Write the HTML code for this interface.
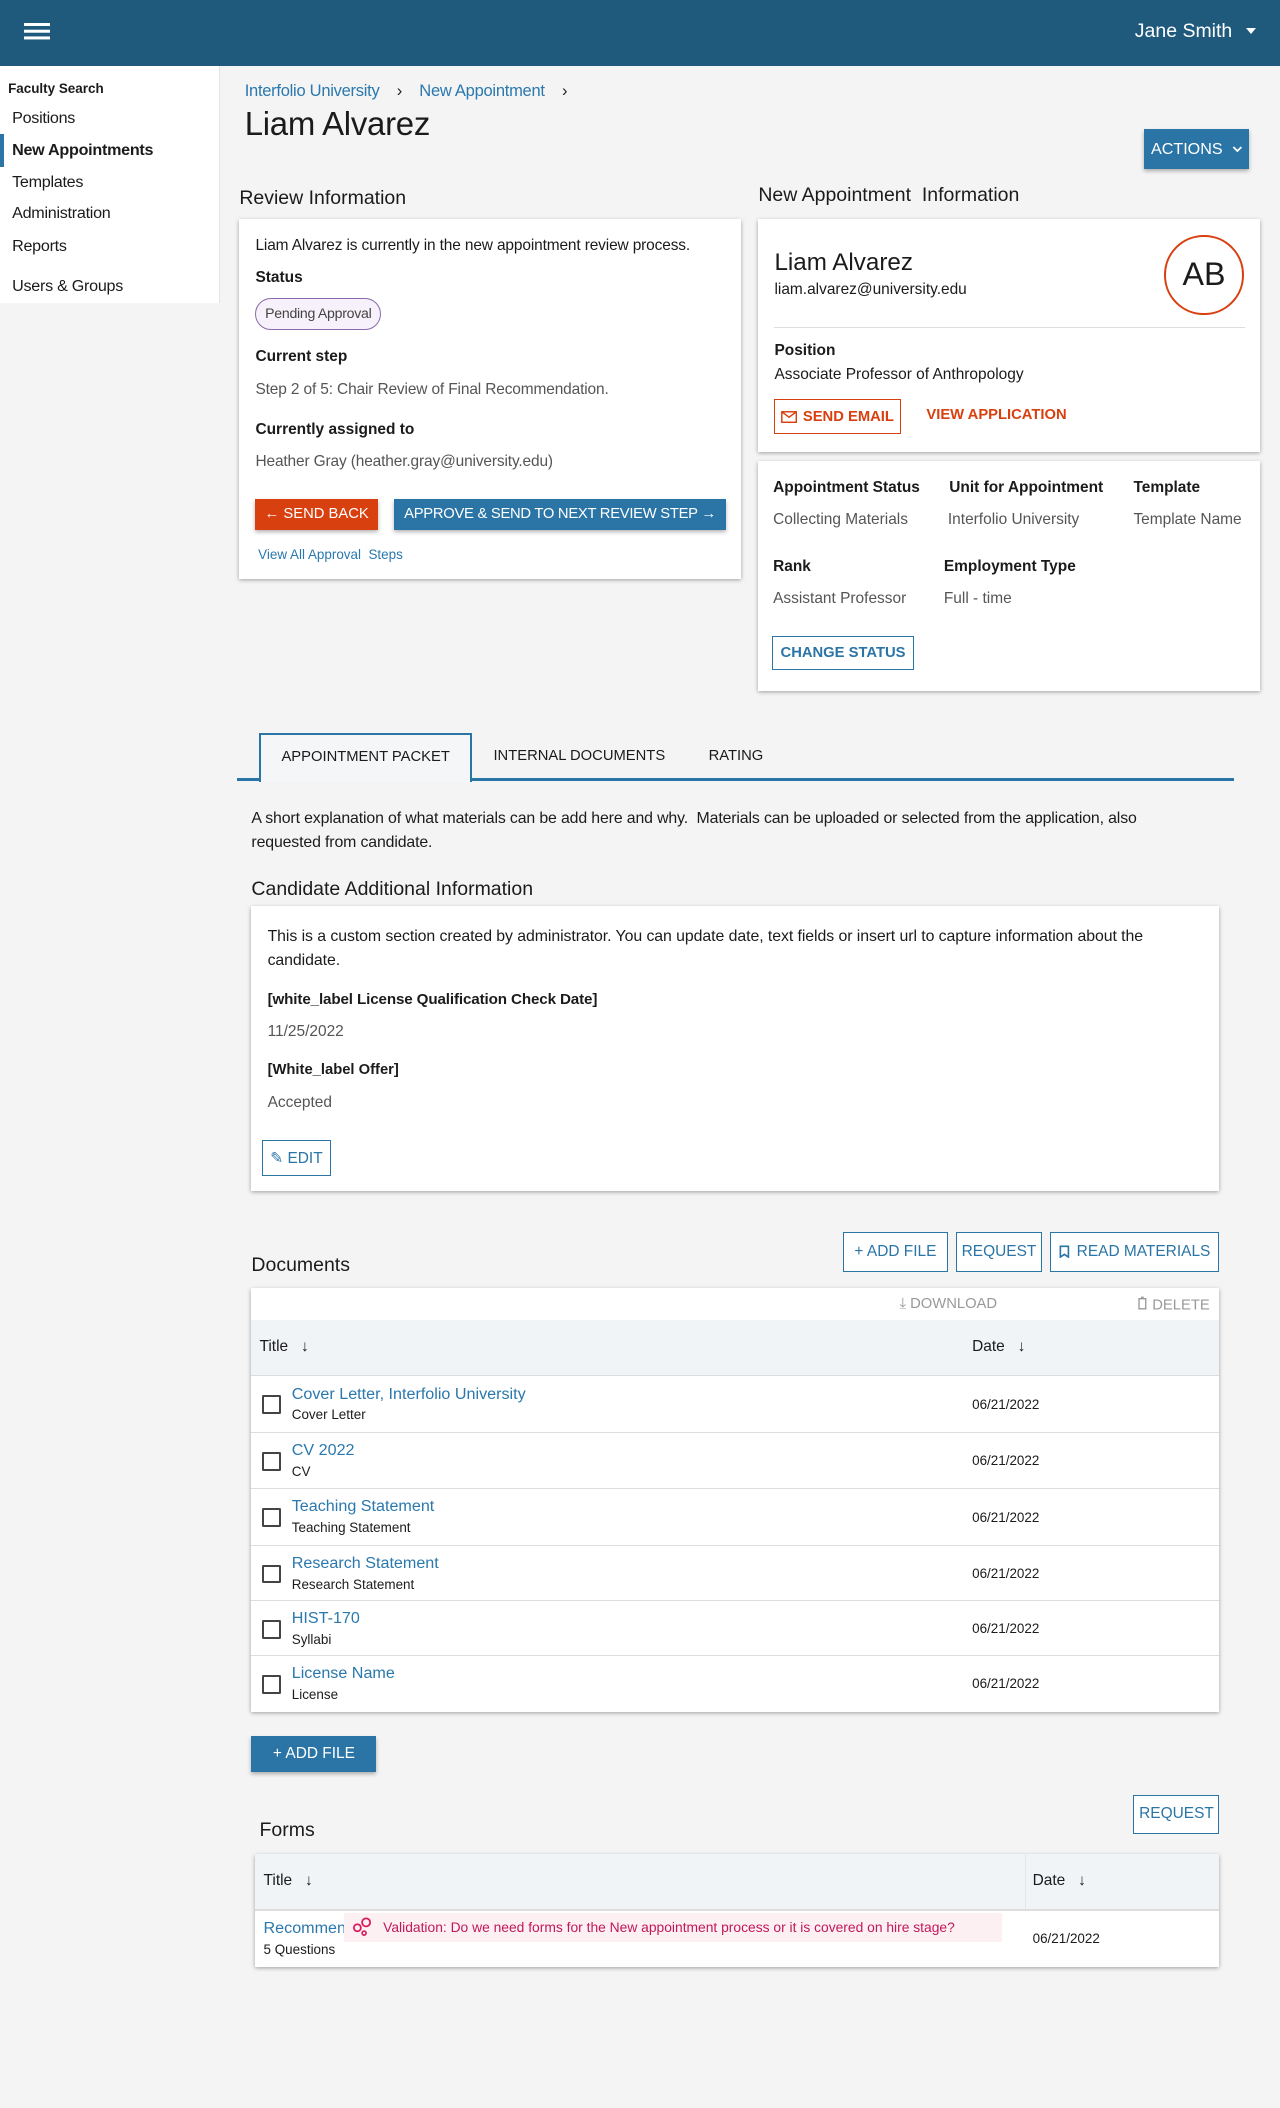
<!DOCTYPE html>
<html><head><meta charset="utf-8">
<style>
html,body{margin:0;padding:0}
body{zoom:1.34454;width:952px;height:1568px;background:#f4f4f4;font-family:"Liberation Sans",Arial,sans-serif;color:#1b1b1b;position:relative;overflow:hidden;font-size:11.5px}
.a{position:absolute;white-space:nowrap}
.card{position:absolute;background:#fff;box-shadow:0 1px 3px rgba(0,0,0,.35)}
.blue{color:#2a78ad}
.grey{color:#555}
.b{font-weight:bold}
.btn{position:absolute;box-sizing:border-box;display:flex;align-items:center;justify-content:center;font-size:11.5px;white-space:nowrap}
.ob{border:1px solid #2a75a6;color:#2a75a6;background:#fff}
.fb{background:#2a75a6;color:#fff;box-shadow:0 2px 3px rgba(0,0,0,.3)}
.cb{position:absolute;width:11px;height:11px;border:1.5px solid #444;border-radius:1px}
.row{position:absolute;left:0;right:0;border-top:1px solid #ddd;height:42px}
.side{font-size:12px;letter-spacing:-0.2px}
</style></head><body>
<div class="a" style="left:0;top:0;width:952px;height:49px;background:#1f5a7d"></div>
<div class="a" style="left:18px;top:17px;width:19px;height:2px;background:#fff;box-shadow:0 5px 0 #fff,0 10px 0 #fff"></div>
<div class="a" style="left:844px;top:15px;color:#fff;font-size:14.5px">Jane Smith</div>
<div class="a" style="left:927px;top:21px;border:4px solid transparent;border-top:5px solid #fff"></div>

<!-- sidebar -->
<div class="a" style="left:0;top:49px;width:163px;height:176px;background:#fff;border-right:1px solid #e4e4e4"></div>
<div class="a b" style="left:6px;top:60px;font-size:10px">Faculty Search</div>
<div class="a side" style="left:9px;top:81px">Positions</div>
<div class="a" style="left:0;top:100px;width:3px;height:24px;background:#2a75a6"></div>
<div class="a b side" style="left:9px;top:105px">New Appointments</div>
<div class="a side" style="left:9px;top:129px">Templates</div>
<div class="a side" style="left:9px;top:152px">Administration</div>
<div class="a side" style="left:9px;top:176px">Reports</div>
<div class="a side" style="left:9px;top:206px">Users &amp; Groups</div>

<div class="a blue" style="left:182px;top:60px;font-size:12.3px;letter-spacing:-0.2px">Interfolio University &nbsp;&nbsp;&nbsp;<span style="color:#222">›</span>&nbsp;&nbsp;&nbsp; New Appointment &nbsp;&nbsp;&nbsp;<span style="color:#222">›</span></div>
<div class="a" style="left:182px;top:78px;font-size:24.5px;letter-spacing:-0.2px">Liam Alvarez</div>
<div class="btn fb" style="left:851px;top:96px;width:78px;height:30px;font-size:12px">ACTIONS &nbsp;<svg width="8" height="6" viewBox="0 0 8 6"><path d="M1 1.5l3 3 3-3" stroke="#fff" stroke-width="1.3" fill="none"/></svg></div>

<!-- review -->
<div class="a" style="left:178px;top:139px;font-size:14.5px">Review Information</div>
<div class="card" style="left:178px;top:163px;width:373px;height:268px"></div>
<div class="a" style="left:190px;top:176px;letter-spacing:-0.1px">Liam Alvarez is currently in the new appointment review process.</div>
<div class="a b" style="left:190px;top:200px">Status</div>
<div class="a" style="left:190px;top:222px;width:92px;height:22px;border:1px solid #8a6aa8;border-radius:12px;background:#f6f1fa;font-size:10.5px;line-height:22px;text-align:center;color:#444;letter-spacing:-0.2px">Pending Approval</div>
<div class="a b" style="left:190px;top:259px">Current step</div>
<div class="a grey" style="left:190px;top:283px;letter-spacing:-0.1px">Step 2 of 5: Chair Review of Final Recommendation.</div>
<div class="a b" style="left:190px;top:313px">Currently assigned to</div>
<div class="a grey" style="left:190px;top:337px;letter-spacing:-0.1px">Heather Gray (heather.gray@university.edu)</div>
<div class="btn" style="left:190px;top:371px;width:91px;height:23px;background:#d9400f;color:#fff;box-shadow:0 2px 3px rgba(0,0,0,.3);font-size:11px">← SEND BACK</div>
<div class="btn fb" style="left:293px;top:371px;width:247px;height:23px;font-size:11px;letter-spacing:-0.2px">APPROVE &amp; SEND TO NEXT REVIEW STEP →</div>
<div class="a blue" style="left:192px;top:407px;font-size:10px">View All Approval&nbsp; Steps</div>

<!-- new appointment info -->
<div class="a" style="left:564px;top:137px;font-size:14.5px">New Appointment&nbsp; Information</div>
<div class="card" style="left:564px;top:163px;width:373px;height:173px"></div>
<div class="a" style="left:576px;top:185px;font-size:18px">Liam Alvarez</div>
<div class="a" style="left:576px;top:209px">liam.alvarez@university.edu</div>
<div class="a" style="left:866px;top:175px;width:56px;height:56px;border:1.5px solid #d9400f;border-radius:50%;text-align:center;line-height:56px;font-size:24px">AB</div>
<div class="a" style="left:576px;top:243px;width:350px;height:1px;background:#ddd"></div>
<div class="a b" style="left:576px;top:254px">Position</div>
<div class="a" style="left:576px;top:272px">Associate Professor of Anthropology</div>
<div class="btn" style="left:576px;top:297px;width:94px;height:26px;border:1px solid #d9400f;color:#d9400f;font-weight:bold;font-size:11px"><svg width="12" height="9" viewBox="0 0 12 9" style="margin-right:4px"><rect x="0.6" y="0.6" width="10.8" height="7.8" stroke="#d9400f" fill="none" stroke-width="1.1"/><path d="M0.6 0.6l5.4 4 5.4-4" stroke="#d9400f" fill="none" stroke-width="1.1"/></svg>SEND EMAIL</div>
<div class="a b" style="left:689px;top:303px;color:#d9400f;font-size:11px">VIEW APPLICATION</div>

<div class="card" style="left:564px;top:343px;width:373px;height:171px"></div>
<div class="a b" style="left:575px;top:356px">Appointment Status</div>
<div class="a b" style="left:706px;top:356px">Unit for Appointment</div>
<div class="a b" style="left:843px;top:356px">Template</div>
<div class="a grey" style="left:575px;top:380px">Collecting Materials</div>
<div class="a grey" style="left:705px;top:380px">Interfolio University</div>
<div class="a grey" style="left:843px;top:380px">Template Name</div>
<div class="a b" style="left:575px;top:415px">Rank</div>
<div class="a b" style="left:702px;top:415px">Employment Type</div>
<div class="a grey" style="left:575px;top:439px">Assistant Professor</div>
<div class="a grey" style="left:702px;top:439px">Full - time</div>
<div class="btn ob" style="left:574px;top:473px;width:106px;height:25px;font-weight:bold;font-size:11px">CHANGE STATUS</div>

<!-- tabs -->
<div class="a" style="left:176px;top:579px;width:742px;height:2px;background:#2a75a6"></div>
<div class="a" style="left:193px;top:545px;width:155px;height:35px;border:2px solid #2a75a6;border-bottom:none;background:#f4f6f8;text-align:center;line-height:34px;font-size:11px">APPOINTMENT PACKET</div>
<div class="a" style="left:367px;top:556px;font-size:11px">INTERNAL DOCUMENTS</div>
<div class="a" style="left:527px;top:556px;font-size:11px">RATING</div>

<div class="a" style="left:187px;top:600px;line-height:18px;font-size:11.8px;letter-spacing:-0.1px">A short explanation of what materials can be add here and why.&nbsp; Materials can be uploaded or selected from the application, also<br>requested from candidate.</div>
<div class="a" style="left:187px;top:653px;font-size:14.5px">Candidate Additional Information</div>
<div class="card" style="left:187px;top:674px;width:720px;height:212px"></div>
<div class="a" style="left:199px;top:688px;line-height:18px;font-size:11.8px;letter-spacing:-0.05px">This is a custom section created by administrator. You can update date, text fields or insert url to capture information about the<br>candidate.</div>
<div class="a b" style="left:199px;top:737px;font-size:11.3px;letter-spacing:-0.1px">[white_label License Qualification Check Date]</div>
<div class="a grey" style="left:199px;top:761px">11/25/2022</div>
<div class="a b" style="left:199px;top:790px;font-size:11px">[White_label Offer]</div>
<div class="a grey" style="left:199px;top:814px">Accepted</div>
<div class="btn ob" style="left:195px;top:848px;width:51px;height:27px">✎ EDIT</div>

<!-- documents -->
<div class="a" style="left:187px;top:933px;font-size:14.5px">Documents</div>
<div class="btn ob" style="left:627px;top:916px;width:78px;height:30px;font-size:11.5px">+ ADD FILE</div>
<div class="btn ob" style="left:711px;top:916px;width:64px;height:30px;font-size:11.5px">REQUEST</div>
<div class="btn ob" style="left:781px;top:916px;width:126px;height:30px;font-size:11.5px"><svg width="8" height="10" viewBox="0 0 8 10" style="margin-right:5px"><path d="M1 1h6v8L4 7 1 9z" stroke="#2a75a6" fill="none" stroke-width="1.2"/></svg>READ MATERIALS</div>
<div class="card" style="left:187px;top:958px;width:720px;height:315px">
 <div class="a" style="left:482px;top:6px;color:#999;font-size:11px">⤓ DOWNLOAD</div>
 <div class="a" style="left:659px;top:6px;color:#999;font-size:11px"><svg width="8" height="10" viewBox="0 0 8 10" style="margin-right:3px"><path d="M1 2h6M3 1h2M1.5 2.5v7h5v-7" stroke="#999" fill="none"/></svg>DELETE</div>
 <div class="a" style="left:0;top:24px;width:720px;height:41px;background:#f0f4f7"></div>
 <div class="a" style="left:6px;top:37px">Title &nbsp; ↓</div>
 <div class="a" style="left:536px;top:37px">Date &nbsp; ↓</div>
 <div class="row" style="top:65px"><div class="cb" style="left:8px;top:14px"></div><div class="a blue" style="left:30px;top:6px;font-size:12px">Cover Letter, Interfolio University</div><div class="a" style="left:30px;top:23px;font-size:10px">Cover Letter</div><div class="a" style="left:536px;top:15px;font-size:10px">06/21/2022</div></div>
 <div class="row" style="top:107px"><div class="cb" style="left:8px;top:14px"></div><div class="a blue" style="left:30px;top:6px;font-size:12px">CV 2022</div><div class="a" style="left:30px;top:23px;font-size:10px">CV</div><div class="a" style="left:536px;top:15px;font-size:10px">06/21/2022</div></div>
 <div class="row" style="top:149px"><div class="cb" style="left:8px;top:14px"></div><div class="a blue" style="left:30px;top:6px;font-size:12px">Teaching Statement</div><div class="a" style="left:30px;top:23px;font-size:10px">Teaching Statement</div><div class="a" style="left:536px;top:15px;font-size:10px">06/21/2022</div></div>
 <div class="row" style="top:191px"><div class="cb" style="left:8px;top:14px"></div><div class="a blue" style="left:30px;top:6px;font-size:12px">Research Statement</div><div class="a" style="left:30px;top:23px;font-size:10px">Research Statement</div><div class="a" style="left:536px;top:15px;font-size:10px">06/21/2022</div></div>
 <div class="row" style="top:232px"><div class="cb" style="left:8px;top:14px"></div><div class="a blue" style="left:30px;top:6px;font-size:12px">HIST-170</div><div class="a" style="left:30px;top:23px;font-size:10px">Syllabi</div><div class="a" style="left:536px;top:15px;font-size:10px">06/21/2022</div></div>
 <div class="row" style="top:273px"><div class="cb" style="left:8px;top:14px"></div><div class="a blue" style="left:30px;top:6px;font-size:12px">License Name</div><div class="a" style="left:30px;top:23px;font-size:10px">License</div><div class="a" style="left:536px;top:15px;font-size:10px">06/21/2022</div></div>
</div>
<div class="btn fb" style="left:187px;top:1291px;width:93px;height:27px;font-size:11.5px">+ ADD FILE</div>

<!-- forms -->
<div class="a" style="left:193px;top:1353px;font-size:14.5px">Forms</div>
<div class="btn ob" style="left:843px;top:1335px;width:64px;height:29px;font-size:11.5px">REQUEST</div>
<div class="card" style="left:190px;top:1379px;width:717px;height:84px">
 <div class="a" style="left:0;top:0;width:717px;height:41px;background:#f0f4f7"></div>
 <div class="a" style="left:572px;top:0;width:1px;height:41px;background:#e2e6ea"></div>
 <div class="a" style="left:6px;top:13px">Title &nbsp; ↓</div>
 <div class="a" style="left:578px;top:13px">Date &nbsp; ↓</div>
 <div class="a" style="left:0;top:41px;width:717px;height:1px;background:#ddd"></div>
 <div class="a blue" style="left:6px;top:48px;font-size:12px">Recommen</div>
 <div class="a" style="left:6px;top:65px;font-size:10px">5 Questions</div>
 <div class="a" style="left:66px;top:44px;width:489px;height:21px;background:#fdf0f2"></div>
 <svg class="a" style="left:72px;top:47px" width="16" height="15" viewBox="0 0 16 15"><circle cx="4" cy="8" r="2.6" stroke="#d81b60" fill="none" stroke-width="1.3"/><circle cx="10.5" cy="4" r="3" stroke="#d81b60" fill="none" stroke-width="1.3"/><circle cx="9" cy="12" r="1.5" stroke="#d81b60" fill="none" stroke-width="1.2"/></svg>
 <div class="a" style="left:95px;top:48px;color:#c2185b;font-size:10.3px">Validation: Do we need forms for the New appointment process or it is covered on hire stage?</div>
 <div class="a" style="left:578px;top:57px;font-size:10px">06/21/2022</div>
</div>
</body></html>
